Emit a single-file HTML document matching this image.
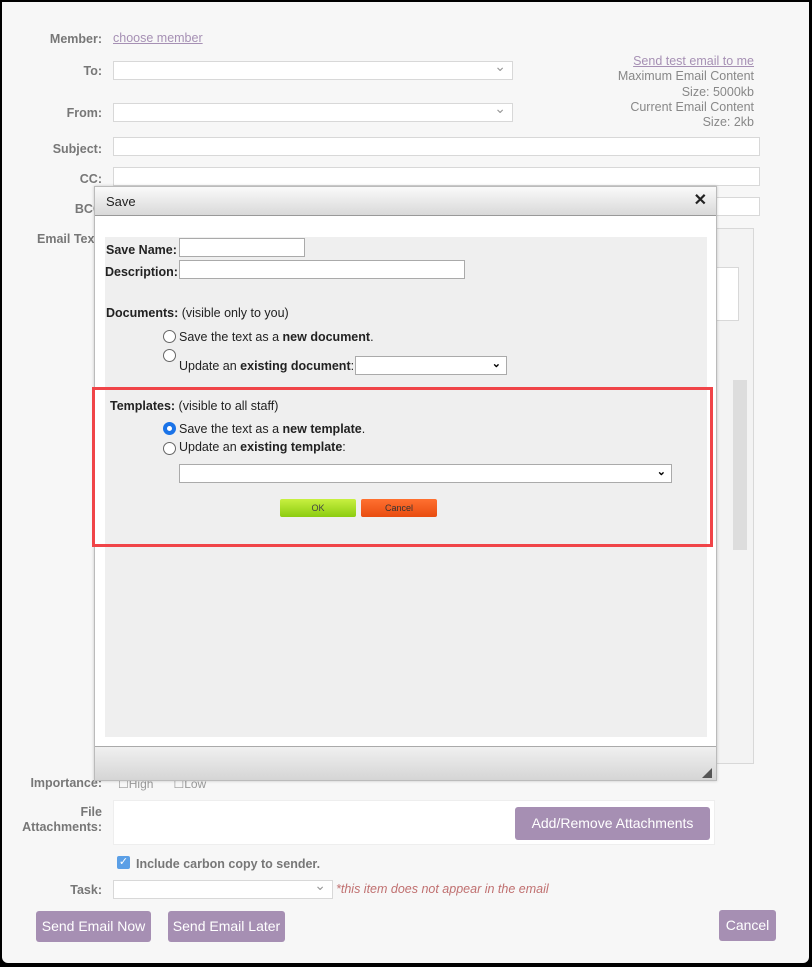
<!DOCTYPE html>
<html><head><style>
*{box-sizing:border-box;margin:0;padding:0}
body{width:812px;height:967px;background:#000;font-family:"Liberation Sans",sans-serif;font-size:13px;position:relative;overflow:hidden}
.pg{position:absolute;left:2px;top:2px;width:807px;height:961px;background:#f7f7f7;border-radius:0 0 6px 6px}
.a{position:absolute}
.lbl{position:absolute;color:#777;font-weight:bold;font-size:12.5px;text-align:right}
.in{position:absolute;background:#fff;border:1px solid #d8d8d8}
.sel::after{content:"⌄";position:absolute;right:6px;top:-4px;color:#999;font-size:14px}
.btn{position:absolute;background:#a68fb3;color:#fff;border-radius:3px;font-size:14px;text-align:center}
.dl{font-size:12.5px;color:#222}
.rad{position:absolute;width:13px;height:13px;border:1px solid #666;border-radius:50%;background:#fff}
</style></head><body>
<div class="pg"></div>
<div class="lbl" style="left:20px;top:32px;width:82px">Member:</div>
<div class="a" style="left:113px;top:31px;color:#a690b4;text-decoration:underline;font-size:12.5px">choose member</div>
<div class="lbl" style="left:20px;top:64px;width:82px">To:</div>
<div class="in sel" style="left:113px;top:61px;width:400px;height:19px"></div>
<div class="lbl" style="left:20px;top:106px;width:82px">From:</div>
<div class="in sel" style="left:113px;top:103px;width:400px;height:19px"></div>
<div class="a" style="left:560px;top:54px;width:194px;text-align:right;color:#888;font-size:12.5px;line-height:15.3px"><span style="color:#a690b4;text-decoration:underline">Send test email to me</span><br>Maximum Email Content<br>Size: 5000kb<br>Current Email Content<br>Size: 2kb</div>
<div class="lbl" style="left:20px;top:142px;width:82px">Subject:</div>
<div class="in" style="left:113px;top:137px;width:647px;height:19px"></div>
<div class="lbl" style="left:20px;top:172px;width:82px">CC:</div>
<div class="in" style="left:113px;top:167px;width:647px;height:19px"></div>
<div class="lbl" style="left:20px;top:202px;width:82px">BCC</div>
<div class="in" style="left:113px;top:197px;width:647px;height:19px"></div>
<div class="lbl" style="left:20px;top:232px;width:82px;text-align:left;padding-left:17px">Email Text</div>
<div class="in" style="left:700px;top:228px;width:54px;height:536px;background:#f3f3f3"></div>
<div class="in" style="left:715px;top:267px;width:24px;height:54px"></div>
<div class="a" style="left:733px;top:380px;width:14px;height:170px;background:#ddd"></div>
<div class="lbl" style="left:20px;top:776px;width:82px">Importance:</div>
<div class="a" style="left:118px;top:777px;color:#999;font-size:12px">☐High &nbsp; &nbsp; &nbsp;☐Low</div>
<div class="lbl" style="left:10px;top:805px;width:92px;line-height:15px">File<br>Attachments:</div>
<div class="in" style="left:113px;top:800px;width:602px;height:45px;border-color:#eee"></div>
<div class="btn" style="left:515px;top:807px;width:195px;height:33px;line-height:33px">Add/Remove Attachments</div>
<div class="a" style="left:117px;top:856px;width:13px;height:13px;background:#5b9fe6;border-radius:2px;color:#fff;font-size:11px;line-height:13px;text-align:center">✓</div>
<div class="a" style="left:136px;top:857px;color:#777;font-weight:bold;font-size:12.5px">Include carbon copy to sender.</div>
<div class="lbl" style="left:20px;top:883px;width:82px">Task:</div>
<div class="in sel" style="left:113px;top:880px;width:220px;height:19px"></div>
<div class="a" style="left:336px;top:882px;color:#c07070;font-style:italic;font-size:12.5px">*this item does not appear in the email</div>
<div class="btn" style="left:36px;top:911px;width:115px;height:31px;line-height:31px">Send Email Now</div>
<div class="btn" style="left:168px;top:911px;width:117px;height:31px;line-height:31px">Send Email Later</div>
<div class="btn" style="left:719px;top:910px;width:57px;height:31px;line-height:31px">Cancel</div>

<div class="a" style="left:94px;top:186px;width:623px;height:595px;background:#fff;border:1px solid #bbb;box-shadow:0 0 3px rgba(0,0,0,.2)">
 <div class="a" style="left:0;top:0;width:621px;height:29px;background:linear-gradient(#fafafa,#d9d9d9);border-bottom:1px solid #999"><span class="a" style="left:11px;top:7px;font-size:13px;color:#222">Save</span><span class="a" style="right:9px;top:3px;font-size:16px;font-weight:bold;color:#222">✕</span></div>
 <div class="a" style="left:10px;top:50px;width:602px;height:500px;background:#efefef"></div>
 <div class="a" style="left:0;top:559px;width:621px;height:34px;background:linear-gradient(#f0f0f0,#d5d5d5);border-top:1px solid #aaa"><span class="a" style="right:4px;bottom:2px;width:0;height:0;border-left:10px solid transparent;border-bottom:10px solid #555"></span></div>
</div>
<div class="a dl" style="left:106px;top:243px;font-weight:bold">Save Name:</div>
<div class="in" style="left:179px;top:238px;width:126px;height:19px;border-color:#aaa"></div>
<div class="a dl" style="left:105px;top:265px;font-weight:bold">Description:</div>
<div class="in" style="left:179px;top:260px;width:286px;height:19px;border-color:#aaa"></div>
<div class="a dl" style="left:106px;top:306px"><b>Documents:</b> (visible only to you)</div>
<div class="rad" style="left:163px;top:330px"></div>
<div class="a dl" style="left:179px;top:330px">Save the text as a <b>new document</b>.</div>
<div class="rad" style="left:163px;top:349px"></div>
<div class="a dl" style="left:179px;top:359px">Update an <b>existing document</b>:</div>
<div class="in" style="left:355px;top:356px;width:152px;height:19px;border-color:#aaa"><span class="a" style="right:5px;top:0;font-size:11px;font-weight:bold">⌄</span></div>
<div class="a dl" style="left:110px;top:399px"><b>Templates:</b> (visible to all staff)</div>
<div class="rad" style="left:163px;top:422px;border:4px solid #1a73e8"></div>
<div class="a dl" style="left:179px;top:422px">Save the text as a <b>new template</b>.</div>
<div class="rad" style="left:163px;top:442px"></div>
<div class="a dl" style="left:179px;top:440px">Update an <b>existing template</b>:</div>
<div class="in" style="left:179px;top:464px;width:493px;height:19px;border-color:#aaa"><span class="a" style="right:5px;top:0;font-size:11px;font-weight:bold">⌄</span></div>
<div class="a" style="left:280px;top:499px;width:76px;height:18px;background:linear-gradient(#c8f040,#8ccc10);border-radius:2px;font-size:9px;color:#444;text-align:center;line-height:18px">OK</div>
<div class="a" style="left:361px;top:499px;width:76px;height:18px;background:linear-gradient(#ff7030,#e84c10);border-radius:2px;font-size:9px;color:#333;text-align:center;line-height:18px">Cancel</div>
<div class="a" style="left:92px;top:387px;width:621px;height:160px;border:3px solid #f04448"></div>
</body></html>
